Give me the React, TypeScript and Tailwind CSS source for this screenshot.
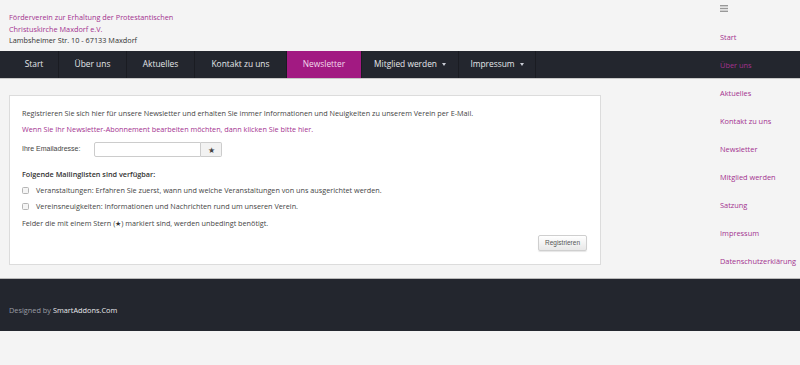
const navItems = [
  { label: 'Start', w: 'w-[59px] pl-[10px]' },
  { label: 'Über uns', w: 'w-[68px]' },
  { label: 'Aktuelles', w: 'w-[68px]' },
  { label: 'Kontakt zu uns', w: 'w-[92px]' },
  { label: 'Newsletter', w: 'w-[75px]', active: true },
  { label: 'Mitglied werden', w: 'w-[97px]', caret: true },
  { label: 'Impressum', w: 'w-[77px]', caret: true },
]

const sideItems = [
  'Start',
  'Über uns',
  'Aktuelles',
  'Kontakt zu uns',
  'Newsletter',
  'Mitglied werden',
  'Satzung',
  'Impressum',
  'Datenschutzerklärung',
]

function Caret() {
  return <span className="ml-[5px] inline-block border-x-[2.5px] border-t-[3px] border-x-transparent border-t-[#c9ccd4] align-middle" />
}

export default function App() {
  return (
    <div className="relative min-h-[365px] w-[800px] bg-[#f4f4f4] font-['Open_Sans',sans-serif] text-[#444]">
      {/* header */}
      <div className="h-[51px] px-[9px] pt-[12px] text-[7.3px] leading-[11.5px]">
        <div className="text-[#a3318f]">Förderverein zur Erhaltung der Protestantischen</div>
        <div className="text-[#a3318f]">Christuskirche Maxdorf e.V.</div>
        <div className="text-[#333]">Lambsheimer Str. 10 - 67133 Maxdorf</div>
      </div>

      {/* main nav */}
      <nav className="flex h-[28px] border-b border-[#c8c8c8] bg-[#23262e]">
        {navItems.map((item) => (
          <div
            key={item.label}
            className={`${item.w} flex items-center justify-center border-r border-[#1a1c22] text-[8.4px] ${
              item.active ? 'bg-[#a21a82] text-[#f3d9ec]' : 'text-[#e4e6ea]'
            }`}
          >
            {item.label}
            {item.caret && <Caret />}
          </div>
        ))}
      </nav>

      {/* content */}
      <div className="pl-[9px] pt-[16px]">
        <div className="h-[170px] w-[592px] border border-[#dcdcdc] bg-white px-[12px] pt-[12px] text-[7.25px]">
          <p className="leading-[11px]">
            Registrieren Sie sich hier für unsere Newsletter und erhalten Sie immer Informationen und Neuigkeiten zu unserem Verein per E-Mail.
          </p>
          <p className="mt-[5px] leading-[11px] text-[#a3318f]">
            Wenn Sie Ihr Newsletter-Abonnement bearbeiten möchten, dann klicken Sie bitte hier.
          </p>
          <div className="mt-[7px] flex items-center">
            <span className="w-[72px] font-['Liberation_Sans',sans-serif] text-[7px] text-[#444]">Ihre Emailadresse:</span>
            <div className="h-[15px] w-[107px] rounded-l-[2px] border border-[#ccc] bg-white" />
            <div className="flex h-[15px] w-[21px] items-center justify-center rounded-r-[2px] border border-l-0 border-[#ccc] bg-[#f2f2f2] text-[8px] text-[#444]">
              ★
            </div>
          </div>
          <p className="mt-[12px] font-semibold leading-[11px] text-[#333]">Folgende Mailinglisten sind verfügbar:</p>
          <div className="mt-[5px] flex items-center leading-[11px]">
            <span className="mr-[7px] h-[7px] w-[7px] rounded-[1.5px] border border-[#b5b5b5] bg-[#f5f5f5]" />
            Veranstaltungen: Erfahren Sie zuerst, wann und welche Veranstaltungen von uns ausgerichtet werden.
          </div>
          <div className="mt-[5px] flex items-center leading-[11px]">
            <span className="mr-[7px] h-[7px] w-[7px] rounded-[1.5px] border border-[#b5b5b5] bg-[#f5f5f5]" />
            Vereinsneuigkeiten: Informationen und Nachrichten rund um unseren Verein.
          </div>
          <p className="mt-[6px] leading-[11px]">
            Felder die mit einem Stern (<span className="text-[7px] text-[#333]">★</span>) markiert sind, werden unbedingt benötigt.
          </p>
          <div className="mt-[6px] flex justify-end pr-[1px]">
            <button className="h-[16px] rounded-[2px] border border-[#cfcfcf] bg-gradient-to-b from-white to-[#e8e8e8] px-[6px] font-['Liberation_Sans',sans-serif] text-[6.5px] text-[#555] shadow-[0_1px_1px_rgba(0,0,0,0.1)]">
              Registrieren
            </button>
          </div>
        </div>
      </div>

      {/* footer */}
      <footer className="mt-[13px] flex h-[53px] items-center border-t border-[#b9b9b9] bg-[#23262e] px-[9px] pt-[11px] text-[7.35px]">
        <span className="text-[#9a9da4]">Designed by&nbsp;</span>
        <span className="text-[#e8e9ec]">SmartAddons.Com</span>
      </footer>

      {/* off-canvas side menu */}
      <aside className="absolute right-0 top-0 w-[110px] text-[7.4px] text-[#a3318f]">
        <div className="flex h-[16px] items-center pl-[30px]">
          <svg width="8" height="7" viewBox="0 0 8 7">
            <rect x="0" y="0" width="8" height="1.4" fill="#999" />
            <rect x="0" y="2.8" width="8" height="1.4" fill="#999" />
            <rect x="0" y="5.6" width="8" height="1.4" fill="#999" />
          </svg>
        </div>
        <ul className="pt-[8px]">
          {sideItems.map((s) => (
            <li key={s} className="flex h-[28px] items-center whitespace-nowrap pl-[30px]">
              {s}
            </li>
          ))}
        </ul>
      </aside>
    </div>
  )
}
